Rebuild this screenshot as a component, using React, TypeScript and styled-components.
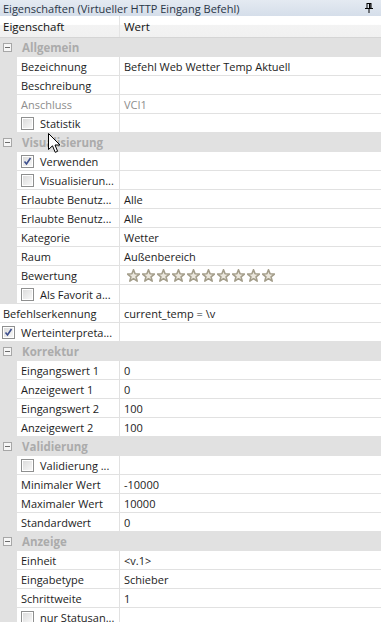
import React from "react";
import styled, { createGlobalStyle } from "styled-components";

const GlobalStyle = createGlobalStyle`
  html, body {
    margin: 0;
    padding: 0;
    background: #ffffff;
  }
  body {
    font-family: "Open Sans", "Noto Sans", "Liberation Sans", sans-serif;
    font-size: 11px;
    color: #1c1c1c;
  }
`;

type RowData =
  | { kind: "text"; name: string; value?: string; disabled?: boolean }
  | { kind: "check"; label: string; checked?: boolean }
  | { kind: "stars"; name: string };

type Section =
  | { kind: "group"; title: string; rows: RowData[] }
  | { kind: "top"; row: RowData };

const sections: Section[] = [
  {
    kind: "group",
    title: "Allgemein",
    rows: [
      { kind: "text", name: "Bezeichnung", value: "Befehl Web Wetter Temp Aktuell" },
      { kind: "text", name: "Beschreibung" },
      { kind: "text", name: "Anschluss", value: "VCI1", disabled: true },
      { kind: "check", label: "Statistik" },
    ],
  },
  {
    kind: "group",
    title: "Visualisierung",
    rows: [
      { kind: "check", label: "Verwenden", checked: true },
      { kind: "check", label: "Visualisierun..." },
      { kind: "text", name: "Erlaubte Benutz...", value: "Alle" },
      { kind: "text", name: "Erlaubte Benutz...", value: "Alle" },
      { kind: "text", name: "Kategorie", value: "Wetter" },
      { kind: "text", name: "Raum", value: "Außenbereich" },
      { kind: "stars", name: "Bewertung" },
      { kind: "check", label: "Als Favorit a..." },
    ],
  },
  { kind: "top", row: { kind: "text", name: "Befehlserkennung", value: "current_temp = \\v" } },
  { kind: "top", row: { kind: "check", label: "Werteinterpreta...", checked: true } },
  {
    kind: "group",
    title: "Korrektur",
    rows: [
      { kind: "text", name: "Eingangswert 1", value: "0" },
      { kind: "text", name: "Anzeigewert 1", value: "0" },
      { kind: "text", name: "Eingangswert 2", value: "100" },
      { kind: "text", name: "Anzeigewert 2", value: "100" },
    ],
  },
  {
    kind: "group",
    title: "Validierung",
    rows: [
      { kind: "check", label: "Validierung ..." },
      { kind: "text", name: "Minimaler Wert", value: "-10000" },
      { kind: "text", name: "Maximaler Wert", value: "10000" },
      { kind: "text", name: "Standardwert", value: "0" },
    ],
  },
  {
    kind: "group",
    title: "Anzeige",
    rows: [
      { kind: "text", name: "Einheit", value: "<v.1>" },
      { kind: "text", name: "Eingabetype", value: "Schieber" },
      { kind: "text", name: "Schrittweite", value: "1" },
      { kind: "check", label: "nur Statusan..." },
    ],
  },
];

const PinIcon = () => (
  <svg width="8" height="10" viewBox="0 0 8 10">
    <rect x="2" y="0.5" width="4" height="5" fill="none" stroke="#000" strokeWidth="1" />
    <rect x="4" y="1" width="1.5" height="4.5" fill="#000" />
    <rect x="0" y="5" width="8" height="1" fill="#000" />
    <rect x="3.5" y="6" width="1" height="4" fill="#000" />
  </svg>
);

const starPoints = (() => {
  const pts: string[] = [];
  for (let i = 0; i < 10; i++) {
    const r = i % 2 === 0 ? 6.3 : 2.7;
    const a = (Math.PI / 5) * i - Math.PI / 2;
    pts.push(`${(6.5 + r * Math.cos(a)).toFixed(2)},${(7 + r * Math.sin(a)).toFixed(2)}`);
  }
  return pts.join(" ");
})();

const Star = () => (
  <svg width="13" height="13" viewBox="0 0 13 13">
    <polygon points={starPoints} fill="#ebe7dd" stroke="#a39d8a" strokeWidth="1.6" strokeLinejoin="round" />
  </svg>
);

const Cursor = () => (
  <svg width="13" height="21" viewBox="0 0 13 21">
    <path
      d="M0.5 0.5 L0.5 16.5 L4.5 12.8 L7.2 19.3 L9.6 18.3 L7 12 L12 12 Z"
      fill="#fff"
      stroke="#000"
      strokeWidth="1"
      strokeLinejoin="miter"
    />
  </svg>
);

const Panel = styled.div`
  position: relative;
  width: 381px;
  height: 622px;
  overflow: hidden;
  background: #ffffff;
`;

const TitleBar = styled.div`
  height: 16px;
  display: flex;
  align-items: center;
  justify-content: space-between;
  padding: 0 8px 0 3px;
  background: linear-gradient(#e4eaf2, #d5deea);
  color: #2a3646;
  font-size: 11px;
  box-sizing: border-box;
`;

const HeaderRow = styled.div`
  height: 22px;
  display: grid;
  grid-template-columns: 120px 1fr;
  background: linear-gradient(#ffffff 0%, #ffffff 40%, #f3f3f3 45%, #f1f1f1 100%);
  border-bottom: 1px solid #d5d5d5;
  box-sizing: border-box;
`;

const HeaderCell = styled.div<{ $divider?: boolean }>`
  display: flex;
  align-items: center;
  padding-left: ${({ $divider }) => ($divider ? "4px" : "3px")};
  border-right: ${({ $divider }) => ($divider ? "none" : "1px solid #e4e4e4")};
  font-size: 11.5px;
  color: #111;
`;

const GroupRow = styled.div`
  height: 19px;
  display: flex;
  align-items: center;
  gap: 10px;
  padding-left: 3px;
  background: #e1e1e1;
  box-sizing: border-box;
`;

const Expander = styled.span`
  width: 7px;
  height: 7px;
  border: 1px solid #a7a7a7;
  background: #f6f6f6;
  position: relative;
  &::after {
    content: "";
    position: absolute;
    left: 1px;
    right: 1px;
    top: 3px;
    height: 1px;
    background: #6d6d6d;
  }
`;

const GroupTitle = styled.span`
  font-weight: bold;
  color: #ababab;
  font-size: 11.5px;
`;

const Row = styled.div<{ $indent: boolean }>`
  height: 19px;
  display: grid;
  grid-template-columns: ${({ $indent }) => ($indent ? "17px 103px 1fr" : "120px 1fr")};
`;

const Indent = styled.div`
  background: #e1e1e1;
`;

const NameCell = styled.div<{ $indent: boolean; $muted?: boolean }>`
  display: flex;
  align-items: center;
  gap: 6px;
  padding-left: ${({ $indent }) => ($indent ? "4px" : "2px")};
  border-right: 1px solid #e1e1e1;
  border-bottom: 1px solid #e1e1e1;
  color: ${({ $muted }) => ($muted ? "#8d8d8d" : "#1c1c1c")};
  white-space: nowrap;
  overflow: hidden;
  box-sizing: border-box;
`;

const NameText = styled.span<{ $pad?: boolean }>`
  padding-left: ${({ $pad }) => ($pad ? "1px" : "0")};
`;

const ValueCell = styled.div<{ $muted?: boolean; $stars?: boolean }>`
  display: flex;
  align-items: center;
  gap: 2px;
  padding-left: ${({ $stars }) => ($stars ? "7px" : "4px")};
  border-bottom: 1px solid #e1e1e1;
  color: ${({ $muted }) => ($muted ? "#8d8d8d" : "#1c1c1c")};
  white-space: nowrap;
  overflow: hidden;
  box-sizing: border-box;
`;

const CheckBox = styled.span`
  flex: 0 0 auto;
  width: 13px;
  height: 13px;
  box-sizing: border-box;
  border: 1px solid #8e8f8f;
  background: #ffffff;
  position: relative;
  &::before {
    content: "";
    position: absolute;
    inset: 1px;
    background: linear-gradient(135deg, #dcdcdc, #f7f7f7);
  }
`;

const CheckMark = styled.svg`
  position: absolute;
  left: 1px;
  top: 1px;
`;

const CursorLayer = styled.div`
  position: absolute;
  left: 48px;
  top: 133px;
  line-height: 0;
`;

const PropertyRow = ({ row, indent }: { row: RowData; indent: boolean }) => {
  if (row.kind === "check") {
    return (
      <Row $indent={indent}>
        {indent && <Indent />}
        <NameCell $indent={indent}>
          <CheckBox>
            {row.checked && (
              <CheckMark width="9" height="9" viewBox="0 0 9 9">
                <path d="M1.5 4.5 L3.5 7 L7.5 1" fill="none" stroke="#3d4f8e" strokeWidth="1.6" />
              </CheckMark>
            )}
          </CheckBox>
          <span>{row.label}</span>
        </NameCell>
        <ValueCell />
      </Row>
    );
  }
  if (row.kind === "stars") {
    return (
      <Row $indent={indent}>
        {indent && <Indent />}
        <NameCell $indent={indent}>
          <NameText>{row.name}</NameText>
        </NameCell>
        <ValueCell $stars>
          {Array.from({ length: 10 }).map((_, i) => (
            <Star key={i} />
          ))}
        </ValueCell>
      </Row>
    );
  }
  return (
    <Row $indent={indent}>
      {indent && <Indent />}
      <NameCell $indent={indent} $muted={row.disabled}>
        <NameText $pad={!indent}>{row.name}</NameText>
      </NameCell>
      <ValueCell $muted={row.disabled}>{row.value}</ValueCell>
    </Row>
  );
};

const App = () => {
  return (
    <>
      <GlobalStyle />
      <Panel>
        <TitleBar>
          <span>Eigenschaften (Virtueller HTTP Eingang Befehl)</span>
          <PinIcon />
        </TitleBar>
        <HeaderRow>
          <HeaderCell>Eigenschaft</HeaderCell>
          <HeaderCell $divider>Wert</HeaderCell>
        </HeaderRow>
        {sections.map((section, i) =>
          section.kind === "group" ? (
            <div key={i}>
              <GroupRow>
                <Expander />
                <GroupTitle>{section.title}</GroupTitle>
              </GroupRow>
              {section.rows.map((row, j) => (
                <PropertyRow key={j} row={row} indent />
              ))}
            </div>
          ) : (
            <PropertyRow key={i} row={section.row} indent={false} />
          )
        )}
        <CursorLayer>
          <Cursor />
        </CursorLayer>
      </Panel>
    </>
  );
};

export default App;
